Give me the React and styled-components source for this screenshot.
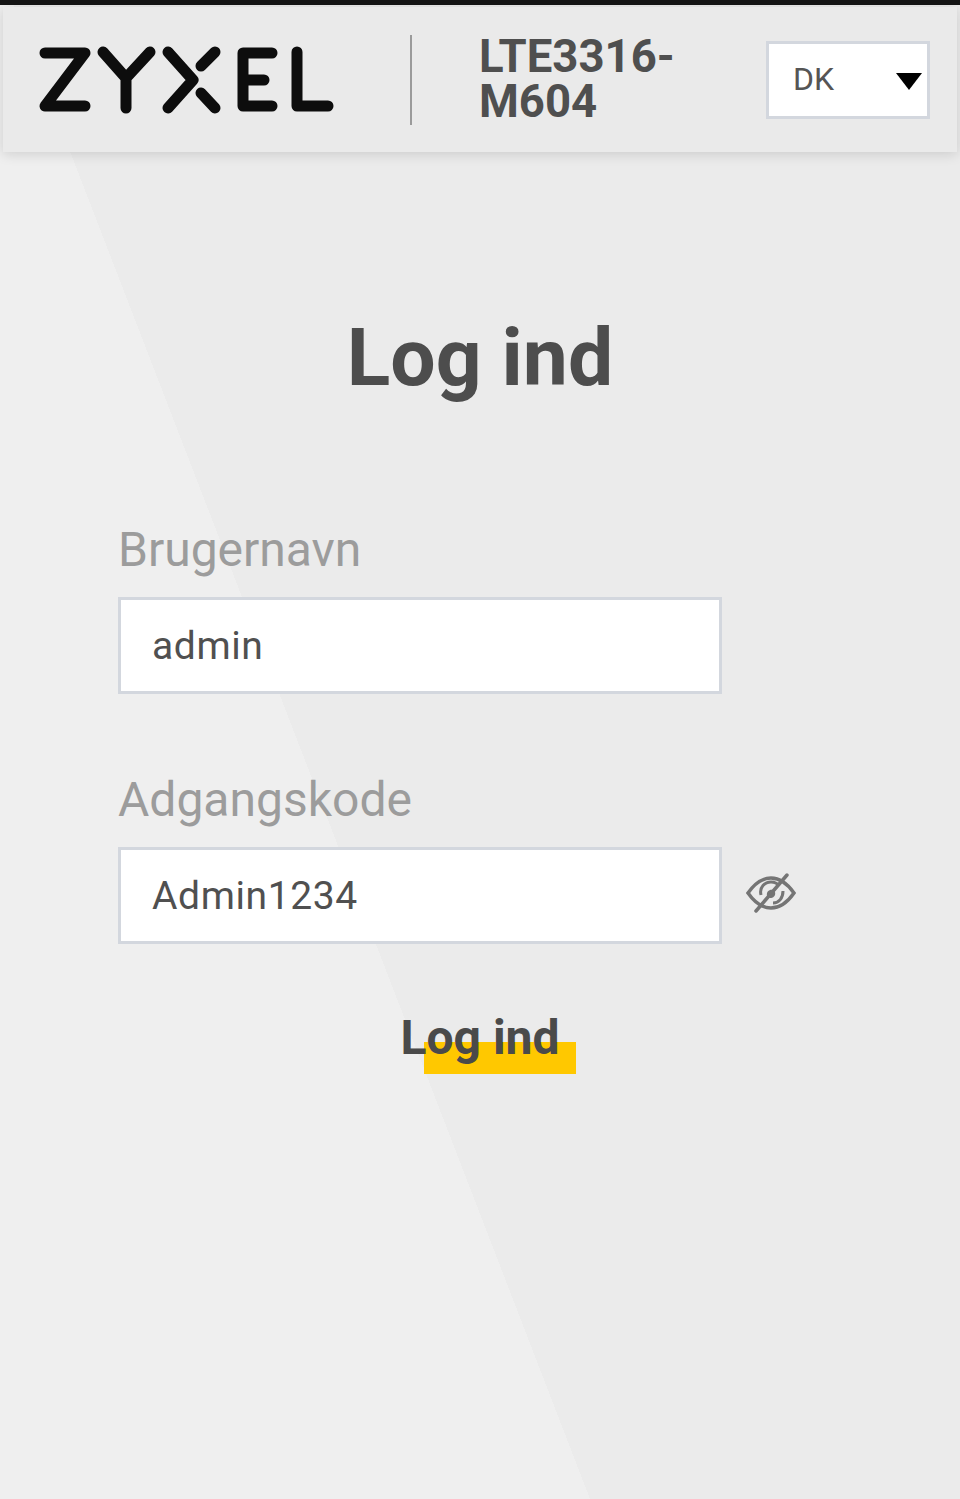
import React from 'react';
import styled, { createGlobalStyle } from 'styled-components';

const GlobalStyle = createGlobalStyle`
  html, body {
    margin: 0;
    padding: 0;
    background: #eeeeee;
  }
  * {
    box-sizing: border-box;
  }
`

const Page = styled.div`
  width: 960px;
  height: 1499px;
  overflow: hidden;
  font-family: Roboto, "Liberation Sans", sans-serif;
  background: linear-gradient(68.9deg, #efefef 38.4%, #ebebeb 38.4%);
  border-top: 5px solid #141414;
`

const Header = styled.header`
  height: 145px;
  margin: 2px 3px 0;
  padding: 0 27px 0 32px;
  display: flex;
  align-items: center;
  background: #eaeaea;
  box-shadow: 0 2px 12px rgba(0, 0, 0, 0.14);
`

const Logo = styled.svg`
  width: 300px;
  height: 70px;
  flex: none;
`

const Divider = styled.div`
  width: 2px;
  height: 90px;
  margin: 0 67px 0 75px;
  flex: none;
  background: #9b9b9b;
`

const Model = styled.div`
  width: 210px;
  flex: none;
  margin-top: -2px;
  font-size: 45.5px;
  line-height: 45px;
  font-weight: 700;
  color: #4f4f4f;
`

const LangSelect = styled.div`
  width: 164px;
  height: 78px;
  margin-left: auto;
  padding: 0 5px 2px 24px;
  display: flex;
  align-items: center;
  justify-content: space-between;
  background: #fff;
  border: 3px solid #d3d7de;
  font-size: 32px;
  color: #555;
`

const Caret = styled.span`
  width: 0;
  height: 0;
  margin-top: 6px;
  border-left: 13px solid transparent;
  border-right: 13px solid transparent;
  border-top: 17px solid #000;
`

const Title = styled.h1`
  margin: 161px 0 0;
  text-align: center;
  font-size: 80.4px;
  line-height: 90px;
  font-weight: 700;
  color: #4d4d4d;
`

const Form = styled.form`
  margin: 120px 0 0;
  padding: 0 118px;
`

const Field = styled.div`
  margin-bottom: ${props => props.$gap}px;
`

const Label = styled.div`
  height: 54px;
  font-size: 48px;
  line-height: 54px;
  color: #9c9c9c;
  margin-bottom: 20px;
`

const InputRow = styled.div`
  display: flex;
  align-items: center;
`

const Input = styled.div`
  width: 604px;
  height: 97px;
  padding-left: 31px;
  display: flex;
  align-items: center;
  background: #fff;
  border: 3px solid #d3d7de;
  font-size: 39px;
  color: #505050;
  letter-spacing: 0.6px;
`

const EyeIcon = styled.svg`
  width: 50px;
  height: 46px;
  margin: -6px 0 0 24px;
  flex: none;
`

const ButtonRow = styled.div`
  display: flex;
  justify-content: center;
  margin-top: 67px;
`

const SubmitButton = styled.button`
  position: relative;
  padding: 0;
  border: none;
  background: none;
  font-family: inherit;
  font-size: 48px;
  line-height: 54px;
  font-weight: 700;
  color: #4a4a4a;

  &::before {
    content: '';
    position: absolute;
    left: 24px;
    top: 31px;
    width: 152px;
    height: 32px;
    background: #ffc800;
  }
`

const ButtonText = styled.span`
  position: relative;
`

const App = () => (
  <Page>
    <GlobalStyle />
    <Header>
      <Logo viewBox="0 0 300 70">
        <g transform="translate(-35 -45)" fill="none" stroke="#0d0d0d" strokeWidth="11" strokeLinecap="round" strokeLinejoin="round">
          <path d="M45 53H85L45 106H85" />
          <path d="M103 52L126 78L150 52M126 78V108" />
          <path d="M168 52L193 80L168 108M215 52L201 66M201 93L215 108" />
          <path d="M272 53H243V106H272M243 80H264" />
          <path d="M297 52V106H328" />
        </g>
      </Logo>
      <Divider />
      <Model>LTE3316-M604</Model>
      <LangSelect>
        DK
        <Caret />
      </LangSelect>
    </Header>
    <Title>Log ind</Title>
    <Form>
      <Field $gap={79}>
        <Label>Brugernavn</Label>
        <Input>admin</Input>
      </Field>
      <Field $gap={0}>
        <Label>Adgangskode</Label>
        <InputRow>
          <Input>Admin1234</Input>
          <EyeIcon viewBox="0 0 50 46" fill="none" stroke="#757575">
            <path d="M2 23C9 13 16 8 25 8S41 13 48 23C41 33 34 38 25 38S9 33 2 23Z" strokeWidth="3.5" />
            <path d="M15 25C13 17 19 12 25 12C28 12 31 13 33 16M37 21C37 28 33 33 27 33" strokeWidth="3" />
            <path d="M21 26C20 21 24 19 27 20L29 22C30 26 27 28 24 28Z" fill="#757575" stroke="none" />
            <path d="M10 41L41 5" strokeWidth="3.5" strokeLinecap="round" />
          </EyeIcon>
        </InputRow>
      </Field>
      <ButtonRow>
        <SubmitButton type="button"><ButtonText>Log ind</ButtonText></SubmitButton>
      </ButtonRow>
    </Form>
  </Page>
);

export default App;
